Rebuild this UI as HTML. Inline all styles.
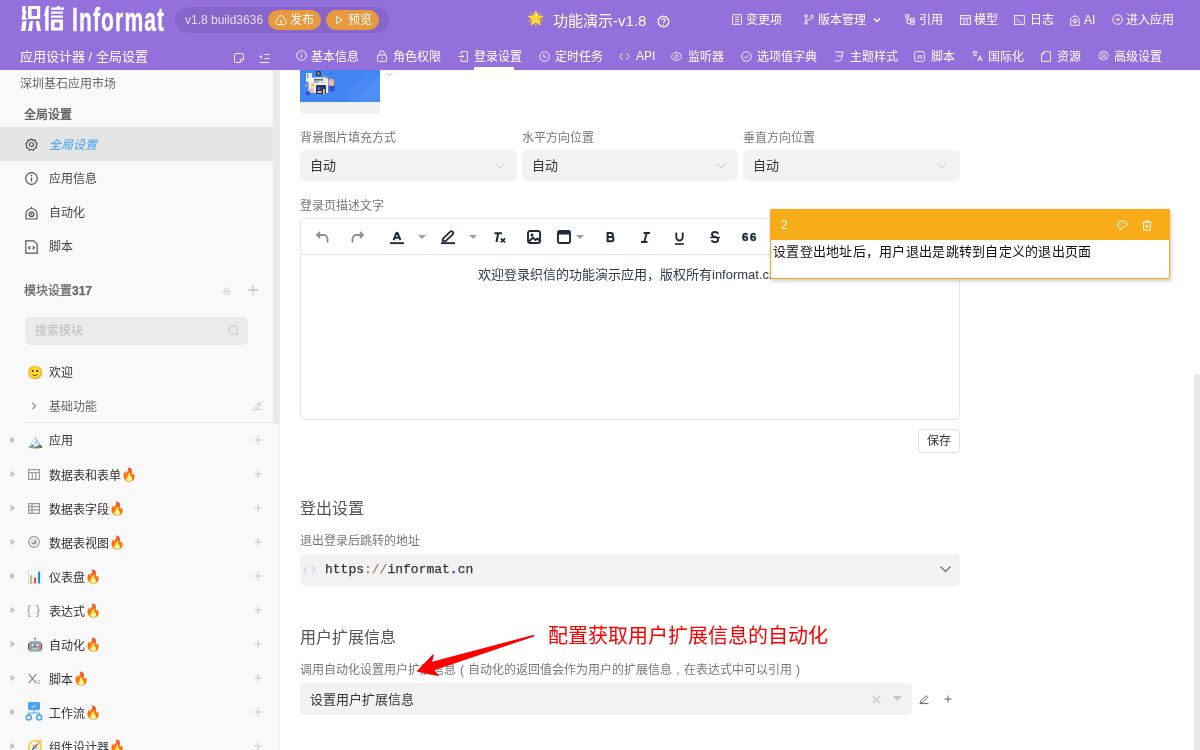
<!DOCTYPE html>
<html lang="zh-CN"><head><meta charset="utf-8">
<style>
*{box-sizing:border-box;margin:0;padding:0}
html,body{width:1200px;height:750px;overflow:hidden;background:#fff;font-family:"Liberation Sans",sans-serif}
.a{position:absolute;white-space:nowrap;line-height:1}
svg.a{overflow:visible}
#hdr{will-change:transform;position:absolute;left:0;top:0;width:1200px;height:70px;background:#9370db}
.w{color:#fff}
.hi{fill:none;stroke:#fff;stroke-width:1;opacity:.88}
#side{will-change:transform;position:absolute;left:0;top:70px;width:280px;height:680px;background:#f9f9f9}
.si{fill:none;stroke:#555;stroke-width:1.2}
.tri{fill:#bcc3ce}
.plus{stroke:#ccc;stroke-width:1.2}
#main{will-change:transform;position:absolute;left:280px;top:70px;width:920px;height:680px;background:#fff}
.lbl{color:#777;font-size:12px}
.sel{position:absolute;background:#f2f2f3;border-radius:6px}
.pc{display:inline-block;width:12px;text-align:center}
.tb{fill:none;stroke:#1f2b3a;stroke-width:1.8}
</style></head><body>

<!-- HEADER -->
<div id="hdr">
  <!-- logo -->
  <svg class="a" style="left:18px;top:3px" width="50" height="30" viewBox="0 0 50 30"><g fill="#fff">
    <path d="M4.4 3H7.8L7.3 7 8.7 9.6 7.6 11.2V14.2L8.8 15.2V16.8H3.6L4 12 5 11 4 9.6Z"/>
    <path fill-rule="evenodd" d="M10 3H22.2V16H10ZM13.6 6V13H19V6Z"/>
    <path d="M4.4 18H8.6L7.3 28H3Z M12 18H15L14 28H10Z M17.6 18H21L23 28H19.2Z"/>
    <path d="M28.2 3H31.6L30.6 6V27.8H27.2V13.5L26 12.5 27.4 7Z"/>
    <path d="M33 4.5H38.5L39 3H41.5L42 4.5H46V6.8H33Z M33 8.5H45V10.8H33Z M33 12.4H45V14.8H33Z"/>
    <path fill-rule="evenodd" d="M33 16.4H45V27.6H33ZM36.6 19.4V24.6H41.6V19.4Z"/>
  </g></svg>
  <div class="a w" style="left:72px;top:2px;font-size:34px;font-weight:bold;transform:scaleX(0.62);transform-origin:left top;-webkit-text-stroke:0.35px #fff;letter-spacing:1.8px">Informat</div>
  <!-- version pill -->
  <div class="a" style="left:175px;top:7px;width:214px;height:26px;border-radius:13px;background:#8766cc"></div>
  <div class="a" style="left:185px;top:14px;font-size:12px;color:#e4dbf6">v1.8 build3636</div>
  <div class="a" style="left:268px;top:10px;width:53px;height:20px;border-radius:10px;background:#e8993f"></div>
  <div class="a" style="left:326px;top:10px;width:53px;height:20px;border-radius:10px;background:#e8993f"></div>
  <svg class="a" style="left:275px;top:14px" width="12" height="12" viewBox="0 0 12 12"><path class="hi" d="M3 10.6H9A2.1 2.1 0 0 0 10.7 7.4C10 4 8.2 1.6 6 1.6S2 4 1.3 7.4A2.1 2.1 0 0 0 3 10.6Z"/><path class="hi" d="M6 10.2V6M4.6 7.4 6 6 7.4 7.4"/></svg>
  <div class="a w" style="left:290px;top:14px;font-size:12px">发布</div>
  <svg class="a" style="left:335px;top:15px" width="9" height="10" viewBox="0 0 9 10"><path class="hi" d="M1.5 1.2 7.3 5 1.5 8.8Z"/></svg>
  <div class="a w" style="left:348px;top:14px;font-size:12px">预览</div>

  <!-- center title -->
  <div class="a" style="left:527px;top:11px;font-size:14px">🌟</div>
  <div class="a w" style="left:553px;top:13px;font-size:15px">功能演示-v1.8</div>
  <svg class="a" style="left:657px;top:15px" width="13" height="13" viewBox="0 0 13 13"><circle class="hi" cx="6.5" cy="6.5" r="5.3" style="stroke-width:1.3;opacity:1"/><path class="hi" d="M4.8 5.2a1.7 1.7 0 1 1 2.4 1.5c-.5.3-.7.6-.7 1.2" style="stroke-width:1.2;opacity:1"/><circle cx="6.5" cy="9.6" r=".7" fill="#fff"/></svg>

  <!-- right items -->
  <svg class="a" style="left:732px;top:14px" width="10" height="11" viewBox="0 0 10 11"><rect class="hi" x=".6" y=".6" width="8.8" height="9.8" rx=".5"/><path class="hi" d="M3 3.2h4M3 5.5h4M3 7.8h4"/></svg>
  <div class="a w" style="left:746px;top:14px;font-size:12px">变更项</div>
  <svg class="a" style="left:804px;top:14px" width="10" height="11" viewBox="0 0 10 11"><circle class="hi" cx="2" cy="2" r="1.3"/><circle class="hi" cx="2" cy="9" r="1.3"/><circle class="hi" cx="8" cy="2.5" r="1.3"/><path class="hi" d="M2 3.3v4.4M8 3.8c0 2.5-6 1.5-6 3.9"/></svg>
  <div class="a w" style="left:818px;top:14px;font-size:12px">版本管理</div>
  <svg class="a" style="left:873px;top:17px" width="8" height="6" viewBox="0 0 8 6"><path class="hi" d="M1 1.5 4 4.5 7 1.5" style="stroke-width:1.3;opacity:1"/></svg>
  <svg class="a" style="left:905px;top:14px" width="10" height="11" viewBox="0 0 10 11"><rect class="hi" x=".6" y=".6" width="3" height="2.6"/><rect class="hi" x="5.6" y="4.3" width="3.6" height="2.4"/><rect class="hi" x="5.6" y="7.8" width="3.6" height="2.4"/><path class="hi" d="M2 3.2v6h3.6M2 5.5h3.6"/></svg>
  <div class="a w" style="left:919px;top:14px;font-size:12px">引用</div>
  <svg class="a" style="left:960px;top:15px" width="11" height="10" viewBox="0 0 11 10"><rect class="hi" x=".6" y=".6" width="9.8" height="8.8"/><path class="hi" d="M.6 3.3h9.8M4 3.3v6M7 3.3v6"/></svg>
  <div class="a w" style="left:974px;top:14px;font-size:12px">模型</div>
  <svg class="a" style="left:1014px;top:15px" width="11" height="10" viewBox="0 0 11 10"><rect class="hi" x=".6" y=".6" width="9.8" height="8.8"/><path class="hi" d="M2.8 3.3 4.5 5 2.8 6.7M5.3 7h2.5"/></svg>
  <div class="a w" style="left:1030px;top:14px;font-size:12px">日志</div>
  <svg class="a" style="left:1070px;top:14px" width="10" height="12" viewBox="0 0 10 12"><path class="hi" d="M.7 11.3V6.5a4.3 4.3 0 0 1 8.6 0v4.8Z"/><circle class="hi" cx="5" cy="7" r="2"/><circle cx="5" cy="7" r=".8" fill="#fff"/><path class="hi" d="M5 1V2.2"/></svg>
  <div class="a w" style="left:1084px;top:14px;font-size:12px">AI</div>
  <svg class="a" style="left:1112px;top:14px" width="11" height="11" viewBox="0 0 11 11"><circle class="hi" cx="5.5" cy="5.5" r="4.8"/><path class="hi" d="M3.2 5.5h4.2M5.7 3.8 7.4 5.5 5.7 7.2"/></svg>
  <div class="a w" style="left:1126px;top:14px;font-size:12px">进入应用</div>

  <!-- row2 -->
  <div class="a w" style="left:20px;top:50px;font-size:13px">应用设计器 / 全局设置</div>
  <svg class="a" style="left:234px;top:53px" width="10" height="10" viewBox="0 0 10 10"><path class="hi" d="M1.5.5h7a1 1 0 0 1 1 1v4.8L6.3 9.5H1.5a1 1 0 0 1-1-1v-7a1 1 0 0 1 1-1Z M9.5 6.3H7.3a1 1 0 0 0-1 1v2.2"/></svg>
  <svg class="a" style="left:259px;top:53px" width="11" height="11" viewBox="0 0 11 11"><path class="hi" d="M5.5 1.5h5M5.5 5.5h5M.5 9.5h10"/><path d="M2.7 1.8 .2 3.8 2.7 5.8Z" fill="#fff" opacity=".88"/></svg>

  <!-- tabs -->
  <svg class="a" style="left:296px;top:50px" width="11" height="11" viewBox="0 0 11 11"><circle class="hi" cx="5.5" cy="5.5" r="4.8"/><path class="hi" d="M5.5 5v3.3"/><circle cx="5.5" cy="3.3" r=".65" fill="#fff"/></svg>
  <div class="a w" style="left:311px;top:51px;font-size:12px">基本信息</div>
  <svg class="a" style="left:377px;top:50px" width="10" height="12" viewBox="0 0 10 12"><rect class="hi" x=".6" y="5" width="8.8" height="6.4" rx=".6"/><path class="hi" d="M2.6 5V3.3a2.4 2.4 0 0 1 4.8 0V5M5 7.3v1.8"/></svg>
  <div class="a w" style="left:393px;top:51px;font-size:12px">角色权限</div>
  <svg class="a" style="left:458px;top:51px" width="10" height="11" viewBox="0 0 10 11"><path class="hi" d="M3 .6h6.4v9.8H3M3 3.5v-2.9M3 10.4v-2.9M.5 5.5h5M3.8 3.8l1.7 1.7-1.7 1.7"/></svg>
  <div class="a w" style="left:474px;top:51px;font-size:12px">登录设置</div>
  <div class="a" style="left:474px;top:67px;width:40px;height:3px;background:#fff"></div>
  <svg class="a" style="left:539px;top:51px" width="11" height="11" viewBox="0 0 11 11"><circle class="hi" cx="5.5" cy="5.5" r="4.8"/><path class="hi" d="M4.8 2.8v3.3h2.6"/></svg>
  <div class="a w" style="left:555px;top:51px;font-size:12px">定时任务</div>
  <svg class="a" style="left:619px;top:52px" width="11" height="9" viewBox="0 0 11 9"><path class="hi" d="M3.6 1 .8 4.5 3.6 8M7.4 1l2.8 3.5L7.4 8"/></svg>
  <div class="a w" style="left:636px;top:50px;font-size:12px">API</div>
  <svg class="a" style="left:671px;top:52px" width="11" height="9" viewBox="0 0 11 9"><ellipse class="hi" cx="5.5" cy="4.5" rx="4.9" ry="3.9"/><circle class="hi" cx="5.5" cy="4.5" r="1.6"/></svg>
  <div class="a w" style="left:688px;top:51px;font-size:12px">监听器</div>
  <svg class="a" style="left:741px;top:51px" width="11" height="11" viewBox="0 0 11 11"><circle class="hi" cx="5.5" cy="5.5" r="4.8"/><path class="hi" d="M3.3 5.6l1.6 1.6 3-3"/></svg>
  <div class="a w" style="left:757px;top:51px;font-size:12px">选项值字典</div>
  <svg class="a" style="left:834px;top:51px" width="10" height="11" viewBox="0 0 10 11"><path class="hi" d="M1 1h8l-1 4H2.5M8 5c0 3-1 5-4.5 5H1"/></svg>
  <div class="a w" style="left:850px;top:51px;font-size:12px">主题样式</div>
  <svg class="a" style="left:914px;top:51px" width="11" height="11" viewBox="0 0 11 11"><rect class="hi" x=".6" y=".6" width="9.8" height="9.8" rx="2"/><path class="hi" d="M3.3 6.5c0 1.3 1.5 1.3 1.5 0V4M6.3 7.2c.8.6 1.8.3 1.8-.5s-1.8-.6-1.8-1.4.9-1 1.7-.6"/></svg>
  <div class="a w" style="left:931px;top:51px;font-size:12px">脚本</div>
  <svg class="a" style="left:972px;top:50px" width="11" height="12" viewBox="0 0 11 12"><path class="hi" d="M.5 2h5M3 .6V2M1.2 2c.5 2 2 3.3 3.8 4M5 2c-.5 2-2 3.5-4.4 4.3M5.8 11.2l2.2-5.5 2.2 5.5M6.6 9.3h2.8"/></svg>
  <div class="a w" style="left:988px;top:51px;font-size:12px">国际化</div>
  <svg class="a" style="left:1041px;top:51px" width="10" height="11" viewBox="0 0 10 11"><path class="hi" d="M3 .6h6.4v9.8H.6V3Z M3 .6V3H.6"/></svg>
  <div class="a w" style="left:1057px;top:51px;font-size:12px">资源</div>
  <svg class="a" style="left:1098px;top:50px" width="11" height="12" viewBox="0 0 11 12"><path class="hi" d="M5.5.8l1.4 1.5 2 -.2.4 2 1.5 1.4-1.5 1.4-.4 2-2-.2-1.4 1.5-1.4-1.5-2 .2-.4-2L.6 5.5l1.5-1.4.4-2 2 .2Z"/><circle class="hi" cx="5.5" cy="5.5" r="1.6"/></svg>
  <div class="a w" style="left:1114px;top:51px;font-size:12px">高级设置</div>
</div>

<!-- SIDEBAR -->

<div id="side">
  <div class="a" style="left:273px;top:0;width:7px;height:354px;background:#e8e9ed;border-radius:0 0 3.5px 3.5px"></div>
  <div class="a" style="left:20px;top:8px;font-size:12px;color:#666">深圳基石应用市场</div>
  <div class="a" style="left:24px;top:39px;font-size:12px;color:#555;font-weight:500;-webkit-text-stroke:.3px #555">全局设置</div>
  <div class="a" style="left:0;top:57px;width:273px;height:34px;background:#e5e5e5"></div>
  <svg class="a" style="left:25px;top:68px" width="13" height="13" viewBox="0 0 13 13"><path class="si" d="M6.5.9l1.6 1.4 2.1-.1.4 2.1 1.6 1.4-1 1.9.3 2.1-2 .7-1.1 1.8-1.9-.9-1.9.9-1.1-1.8-2-.7.3-2.1-1-1.9 1.6-1.4.4-2.1 2.1.1Z" stroke="#333"/><circle class="si" cx="6.5" cy="6.5" r="2" stroke="#333"/></svg>
  <div class="a" style="left:49px;top:69px;font-size:12px;color:#3ea1fa;font-style:italic">全局设置</div>
  <svg class="a" style="left:25px;top:102px" width="13" height="13" viewBox="0 0 13 13"><circle class="si" cx="6.5" cy="6.5" r="5.8"/><path class="si" d="M6.5 5.5v4"/><circle cx="6.5" cy="3.6" r=".8" fill="#555"/></svg>
  <div class="a" style="left:49px;top:103px;font-size:12px;color:#444">应用信息</div>
  <svg class="a" style="left:25px;top:136px" width="13" height="14" viewBox="0 0 13 14"><path class="si" d="M1 13V8a5.5 5.5 0 0 1 11 0v5Z"/><circle class="si" cx="6.5" cy="8.3" r="2.4"/><circle cx="6.5" cy="8.3" r="1" fill="#555"/><path class="si" d="M6.5 .8v1.8"/></svg>
  <div class="a" style="left:49px;top:137px;font-size:12px;color:#444">自动化</div>
  <svg class="a" style="left:25px;top:170px" width="13" height="14" viewBox="0 0 13 14"><path class="si" d="M.8.8h8l3.4 3.4v9H.8Z"/><path class="si" d="M5.3 6.3 3.6 7.8 5.3 9.3M7.7 6.3l1.7 1.5-1.7 1.5"/></svg>
  <div class="a" style="left:49px;top:171px;font-size:12px;color:#444">脚本</div>

  <div class="a" style="left:24px;top:215px;font-size:12px;color:#666;font-weight:500;-webkit-text-stroke:.25px #666">模块设置<b>317</b></div>
  <svg class="a" style="left:222px;top:216px" width="9" height="9" viewBox="0 0 9 9"><path d="M4.5 1.2 7.8 5.5H1.2Z" fill="none" stroke="#c8c8c8" stroke-width=".9"/><path d="M1 7.8h7" stroke="#c8c8c8" stroke-width=".9"/></svg>
  <svg class="a" style="left:248px;top:215px" width="10" height="10" viewBox="0 0 10 10"><path d="M5 0v10M0 5h10" stroke="#c4c4c4" stroke-width="1.3"/></svg>
  <div class="a" style="left:25px;top:247px;width:223px;height:28px;border-radius:5px;background:#ebebeb"></div>
  <div class="a" style="left:35px;top:255px;font-size:12px;color:#bbb">搜索模块</div>
  <svg class="a" style="left:228px;top:255px" width="12" height="11" viewBox="0 0 12 11"><circle cx="5.2" cy="5" r="4.3" fill="none" stroke="#c4c4c4" stroke-width="1.1"/><path d="M8.3 8.1l2.3 2.2" stroke="#c4c4c4" stroke-width="1.1"/></svg>

  <div class="a" style="left:27px;top:296px;font-size:13px">🙂</div>
  <div class="a" style="left:49px;top:297px;font-size:12px;color:#333">欢迎</div>
  <svg class="a" style="left:31px;top:332px" width="6" height="8" viewBox="0 0 6 8"><path d="M1.5 1 4.5 4 1.5 7" fill="none" stroke="#888" stroke-width="1.1"/></svg>
  <div class="a" style="left:49px;top:331px;font-size:12px;color:#666">基础功能</div>
  <svg class="a" style="left:252px;top:329px" width="11" height="11" viewBox="0 0 11 11"><path d="M1.5 9.5 8 3l1.5 1.5L3 11H1.5Z M.5 10.5h10" fill="none" stroke="#ccc" stroke-width="1"/></svg>
  <div class="a" style="left:24px;top:352px;width:249px;height:1px;background:#e6e6e6"></div>
  <div class="a" style="left:279px;top:352px;width:1px;height:328px;background:#ececec"></div>
  <div class="a" style="left:0;top:365px;width:279px;height:12px">
    <svg class="a" style="left:10px;top:1px" width="6" height="8" viewBox="0 0 6 8"><path class="tri" d="M.5.5 5.2 4 .5 7.5Z"/></svg>
    <div class="a" style="left:27px;top:0px;font-size:13px">🏔️</div>
    <div class="a" style="left:49px;top:0;font-size:12px;color:#333">应用</div>
    <svg class="a" style="left:254px;top:1px" width="8" height="8" viewBox="0 0 8 8"><path class="plus" d="M4 0v8M0 4h8"/></svg>
  </div>
  <div class="a" style="left:0;top:399px;width:279px;height:12px">
    <svg class="a" style="left:10px;top:1px" width="6" height="8" viewBox="0 0 6 8"><path class="tri" d="M.5.5 5.2 4 .5 7.5Z"/></svg>
    <svg class="a" style="left:28px;top:0px" width="12" height="11" viewBox="0 0 12 11"><rect x=".6" y=".6" width="10.8" height="9.8" fill="none" stroke="#999" stroke-width="1.2"/><path d="M.6 3.5h10.8M4.3 3.5v7M7.7 3.5v7" stroke="#999" stroke-width="1.2"/></svg>
    <div class="a" style="left:49px;top:0;font-size:12px;color:#333">数据表和表单<span style="font-size:13px;position:relative;top:-1px;left:-.5px">🔥</span></div>
    <svg class="a" style="left:254px;top:1px" width="8" height="8" viewBox="0 0 8 8"><path class="plus" d="M4 0v8M0 4h8"/></svg>
  </div>
  <div class="a" style="left:0;top:433px;width:279px;height:12px">
    <svg class="a" style="left:10px;top:1px" width="6" height="8" viewBox="0 0 6 8"><path class="tri" d="M.5.5 5.2 4 .5 7.5Z"/></svg>
    <svg class="a" style="left:28px;top:0px" width="12" height="11" viewBox="0 0 12 11"><rect x=".6" y=".6" width="10.8" height="9.8" fill="none" stroke="#999" stroke-width="1.2"/><path d="M.6 3.7h10.8M.6 6.9h10.8M4 .6v9.8" stroke="#999" stroke-width="1.2"/></svg>
    <div class="a" style="left:49px;top:0;font-size:12px;color:#333">数据表字段<span style="font-size:13px;position:relative;top:-1px;left:-.5px">🔥</span></div>
    <svg class="a" style="left:254px;top:1px" width="8" height="8" viewBox="0 0 8 8"><path class="plus" d="M4 0v8M0 4h8"/></svg>
  </div>
  <div class="a" style="left:0;top:467px;width:279px;height:12px">
    <svg class="a" style="left:10px;top:1px" width="6" height="8" viewBox="0 0 6 8"><path class="tri" d="M.5.5 5.2 4 .5 7.5Z"/></svg>
    <svg class="a" style="left:28px;top:-1px" width="12" height="12" viewBox="0 0 12 12"><circle cx="6" cy="6" r="5.3" fill="none" stroke="#999" stroke-width="1.2"/><circle cx="6" cy="6" r="2.6" fill="#999"/><circle cx="5.2" cy="5.2" r="1.2" fill="#f9f9f9"/></svg>
    <div class="a" style="left:49px;top:0;font-size:12px;color:#333">数据表视图<span style="font-size:13px;position:relative;top:-1px;left:-.5px">🔥</span></div>
    <svg class="a" style="left:254px;top:1px" width="8" height="8" viewBox="0 0 8 8"><path class="plus" d="M4 0v8M0 4h8"/></svg>
  </div>
  <div class="a" style="left:0;top:501px;width:279px;height:12px">
    <svg class="a" style="left:10px;top:1px" width="6" height="8" viewBox="0 0 6 8"><path class="tri" d="M.5.5 5.2 4 .5 7.5Z"/></svg>
    <div class="a" style="left:27px;top:-1px;font-size:13px">📊</div>
    <div class="a" style="left:49px;top:0;font-size:12px;color:#333">仪表盘<span style="font-size:13px;position:relative;top:-1px;left:-.5px">🔥</span></div>
    <svg class="a" style="left:254px;top:1px" width="8" height="8" viewBox="0 0 8 8"><path class="plus" d="M4 0v8M0 4h8"/></svg>
  </div>
  <div class="a" style="left:0;top:535px;width:279px;height:12px">
    <svg class="a" style="left:10px;top:1px" width="6" height="8" viewBox="0 0 6 8"><path class="tri" d="M.5.5 5.2 4 .5 7.5Z"/></svg>
    <div class="a" style="left:27px;top:-1px;font-size:12px;color:#999">{</div><div class="a" style="left:36px;top:-1px;font-size:12px;color:#999">}</div>
    <div class="a" style="left:49px;top:0;font-size:12px;color:#333">表达式<span style="font-size:13px;position:relative;top:-1px;left:-.5px">🔥</span></div>
    <svg class="a" style="left:254px;top:1px" width="8" height="8" viewBox="0 0 8 8"><path class="plus" d="M4 0v8M0 4h8"/></svg>
  </div>
  <div class="a" style="left:0;top:569px;width:279px;height:12px">
    <svg class="a" style="left:10px;top:1px" width="6" height="8" viewBox="0 0 6 8"><path class="tri" d="M.5.5 5.2 4 .5 7.5Z"/></svg>
    <div class="a" style="left:27px;top:-1px;font-size:13px">🤖</div>
    <div class="a" style="left:49px;top:0;font-size:12px;color:#333">自动化<span style="font-size:13px;position:relative;top:-1px;left:-.5px">🔥</span></div>
    <svg class="a" style="left:254px;top:1px" width="8" height="8" viewBox="0 0 8 8"><path class="plus" d="M4 0v8M0 4h8"/></svg>
  </div>
  <div class="a" style="left:0;top:603px;width:279px;height:12px">
    <svg class="a" style="left:10px;top:1px" width="6" height="8" viewBox="0 0 6 8"><path class="tri" d="M.5.5 5.2 4 .5 7.5Z"/></svg>
    <svg class="a" style="left:28px;top:0px" width="13" height="12" viewBox="0 0 13 12"><path d="M.8 .8 8.3 10.2M8.3 .8 .8 10.2" stroke="#8c8c8c" stroke-width="1.25"/><text x="9.2" y="10.8" font-size="5" fill="#8c8c8c" font-family="Liberation Sans">2</text></svg>
    <div class="a" style="left:49px;top:0;font-size:12px;color:#333">脚本<span style="font-size:13px;position:relative;top:-1px;left:-.5px">🔥</span></div>
    <svg class="a" style="left:254px;top:1px" width="8" height="8" viewBox="0 0 8 8"><path class="plus" d="M4 0v8M0 4h8"/></svg>
  </div>
  <div class="a" style="left:0;top:637px;width:279px;height:12px">
    <svg class="a" style="left:10px;top:1px" width="6" height="8" viewBox="0 0 6 8"><path class="tri" d="M.5.5 5.2 4 .5 7.5Z"/></svg>
    <svg class="a" style="left:25px;top:-5px" width="18" height="19" viewBox="0 0 18 19"><rect x="3" y="0" width="12" height="8" rx="1.5" fill="#4aa3f7"/><path d="M6.8 4 8.3 5.3 11 2.8" fill="none" stroke="#fff" stroke-width=".9"/><path d="M9 8v3M3.8 13.5v-2.5h10.4v2.5" fill="none" stroke="#4aa3f7" stroke-width="1.2"/><circle cx="3.8" cy="15.5" r="2.5" fill="none" stroke="#4aa3f7" stroke-width="1.5"/><circle cx="14.2" cy="15.5" r="2.5" fill="none" stroke="#4aa3f7" stroke-width="1.5"/></svg>
    <div class="a" style="left:49px;top:0;font-size:12px;color:#333">工作流<span style="font-size:13px;position:relative;top:-1px;left:-.5px">🔥</span></div>
    <svg class="a" style="left:254px;top:1px" width="8" height="8" viewBox="0 0 8 8"><path class="plus" d="M4 0v8M0 4h8"/></svg>
  </div>
  <div class="a" style="left:0;top:671px;width:279px;height:12px">
    <svg class="a" style="left:10px;top:1px" width="6" height="8" viewBox="0 0 6 8"><path class="tri" d="M.5.5 5.2 4 .5 7.5Z"/></svg>
    <div class="a" style="left:27px;top:-1px;font-size:13px">🧭</div>
    <div class="a" style="left:49px;top:0;font-size:12px;color:#333">组件设计器<span style="font-size:13px;position:relative;top:-1px;left:-.5px">🔥</span></div>
    <svg class="a" style="left:254px;top:1px" width="8" height="8" viewBox="0 0 8 8"><path class="plus" d="M4 0v8M0 4h8"/></svg>
  </div>
</div>

<!-- MAIN -->

<div id="main">
  <!-- image thumb (main coords: x-280, y-70) -->
  <div class="a" style="left:20px;top:0;width:80px;height:44px;border-radius:0 0 5px 5px;background:#f0f0f0;overflow:hidden">
    <svg class="a" style="left:0;top:0;overflow:hidden" width="80" height="32" viewBox="0 0 80 32">
      <rect width="80" height="32" fill="#4186f2"/>
      <rect x="50" y="8" width="34" height="34" rx="4" fill="#4889f3" transform="rotate(45 67 25)"/>
      <rect x="62" y="12" width="34" height="34" rx="4" fill="#4f8ef4" transform="rotate(45 79 29)"/>
      <rect x="6" y="3" width="6" height="9" rx=".5" fill="#e6ebf8"/>
      <path d="M7 5h1.5M7 7h1.5" stroke="#3a4fc6" stroke-width="1"/>
      <rect x="8.5" y="7.5" width="19.5" height="15.5" rx="1" fill="#eceff8"/>
      <rect x="14" y="9" width="9" height="1.6" fill="#5b6275"/>
      <path d="M14 12.5c2-1.5 3 1 5-.5M21 12.5c1.5-1 2.5.5 4-.5" stroke="#d9b24a" stroke-width=".8" fill="none"/>
      <path d="M14 12c2-1 3 1 5-.5" stroke="#4f63d8" stroke-width=".8" fill="none"/>
      <rect x="16" y="15" width="10" height="9" rx="1" fill="#28335e"/>
      <rect x="17.5" y="17" width="3" height="3" rx="1.5" fill="#4a63e0"/>
      <rect x="17.5" y="21" width="4" height="2" fill="#c9ccd6"/>
      <rect x="23" y="19" width="2" height="5" fill="#f0b93a"/>
      <rect x="16" y="1" width="5" height="5" rx=".8" fill="#2a3566"/>
      <rect x="17.5" y="2.5" width="2" height="2" fill="#e9b949"/>
      <ellipse cx="12.7" cy="15.2" rx="1.8" ry="2.3" fill="#f5c84a"/>
      <path d="M9.5 18.5h4.5v4.5h-4.5Z" fill="#f0b39c"/>
      <path d="M5.5 22l4-1 1 3.5-4 1.5Z" fill="#3b4bd0"/>
      <path d="M24 5c1 2.5 3.5 3.5 5 2.5-.5 1.5-2.5 2-4 1-1-.8-1.3-2.2-1-3.5Z" fill="#f3c444"/>
      <rect x="28.5" y="9" width="5.5" height="7" rx="2" fill="#f1b8a2"/>
      <rect x="29.5" y="16" width="5" height="5.5" fill="#3c4cc8"/>
      <circle cx="6" cy="15.5" r="1" fill="#f0b93a"/>
      <circle cx="31" cy="3.5" r=".8" fill="#3a50c8"/>
    </svg>
  </div>
  <svg class="a" style="left:106px;top:2px" width="7" height="4" viewBox="0 0 7 4"><path d="M.5.5 3.5 3.3 6.5.5" fill="none" stroke="#c8c8c8" stroke-width=".9"/></svg>

  <!-- three selects -->
  <div class="a lbl" style="left:20px;top:62px">背景图片填充方式</div>
  <div class="a lbl" style="left:242px;top:62px">水平方向位置</div>
  <div class="a lbl" style="left:463px;top:62px">垂直方向位置</div>
  <div class="sel" style="left:20px;top:80px;width:217px;height:31px"></div>
  <div class="sel" style="left:242px;top:80px;width:216px;height:31px"></div>
  <div class="sel" style="left:463px;top:80px;width:217px;height:31px"></div>
  <div class="a" style="left:30px;top:89px;font-size:13px;color:#333">自动</div>
  <div class="a" style="left:252px;top:89px;font-size:13px;color:#333">自动</div>
  <div class="a" style="left:473px;top:89px;font-size:13px;color:#333">自动</div>
  <svg class="a" style="left:215px;top:93px" width="10" height="6" viewBox="0 0 10 6"><path d="M.5.5 5 5 9.5.5" fill="none" stroke="#c9c9cf" stroke-width="1"/></svg>
  <svg class="a" style="left:436px;top:93px" width="10" height="6" viewBox="0 0 10 6"><path d="M.5.5 5 5 9.5.5" fill="none" stroke="#c9c9cf" stroke-width="1"/></svg>
  <svg class="a" style="left:657px;top:93px" width="10" height="6" viewBox="0 0 10 6"><path d="M.5.5 5 5 9.5.5" fill="none" stroke="#c9c9cf" stroke-width="1"/></svg>

  <!-- editor -->
  <div class="a lbl" style="left:20px;top:130px">登录页描述文字</div>
  <div class="a" style="left:20px;top:148px;width:660px;height:202px;border:1px solid #e3e5ec;border-radius:5px"></div>
  <div class="a" style="left:21px;top:184px;width:658px;height:1px;background:#e3e5ec"></div>
  <!-- toolbar icons -->
  <svg class="a" style="left:36px;top:161px" width="13" height="12" viewBox="0 0 13 12"><path d="M4 1 1 4l3 3M1 4h6.5A4 4 0 0 1 11.5 8v3.5" fill="none" stroke="#8a9099" stroke-width="1.8"/></svg>
  <svg class="a" style="left:71px;top:161px" width="13" height="12" viewBox="0 0 13 12"><path d="M9 1l3 3-3 3M12 4H5.5A4 4 0 0 0 1.5 8v3.5" fill="none" stroke="#8a9099" stroke-width="1.8"/></svg>
  <svg class="a" style="left:110px;top:160px" width="14" height="16" viewBox="0 0 14 16"><path d="M3.6 10.2 6.2 3.4Q7 1.9 7.8 3.4L10.4 10.2M4.9 7.7h4.2" fill="none" stroke="#1f2b3a" stroke-width="2"/><rect x="0" y="12.2" width="14" height="1.9" fill="#1f2b3a"/></svg>
  <svg class="a" style="left:138px;top:165px" width="8" height="4" viewBox="0 0 8 4"><path d="M0 0h8L4 4Z" fill="#9aa0a8"/></svg>
  <svg class="a" style="left:161px;top:160px" width="14" height="16" viewBox="0 0 14 16"><path d="M1.5 10.8 2 8.6 9.3 1.6a1.4 1.4 0 0 1 2 0l.6.6a1.4 1.4 0 0 1 0 2L4.6 11.2Z" fill="none" stroke="#1f2b3a" stroke-width="1.8" stroke-linejoin="round"/><rect x="0" y="12.2" width="14" height="1.9" fill="#1f2b3a"/></svg>
  <svg class="a" style="left:189px;top:165px" width="8" height="4" viewBox="0 0 8 4"><path d="M0 0h8L4 4Z" fill="#9aa0a8"/></svg>
  <svg class="a" style="left:214px;top:162px" width="12" height="11" viewBox="0 0 12 11"><path d="M.5 1.2h7.5M4.2 1.2 2.5 10" fill="none" stroke="#1f2b3a" stroke-width="2"/><path d="M6.8 6.3l4.2 4M11 6.3l-4.2 4" stroke="#1f2b3a" stroke-width="1.6"/></svg>
  <svg class="a" style="left:247px;top:160px" width="14" height="14" viewBox="0 0 14 14"><rect x="1" y="1" width="12" height="12" rx="2" fill="none" stroke="#1f2b3a" stroke-width="1.9"/><circle cx="5" cy="5" r="1.5" fill="#1f2b3a"/><path d="M1.5 12 6 7.5l2.5 2.5 2-1.5 2.5 2.5" fill="none" stroke="#1f2b3a" stroke-width="1.9"/></svg>
  <svg class="a" style="left:277px;top:160px" width="14" height="14" viewBox="0 0 14 14"><rect x="1" y="1" width="12" height="12" rx="1.5" fill="none" stroke="#1f2b3a" stroke-width="1.9"/><rect x="1" y="1" width="12" height="3.5" fill="#1f2b3a"/></svg>
  <svg class="a" style="left:296px;top:165px" width="8" height="4" viewBox="0 0 8 4"><path d="M0 0h8L4 4Z" fill="#9aa0a8"/></svg>
  <svg class="a" style="left:326px;top:162px" width="9" height="10" viewBox="0 0 9 10"><path d="M1.6 1h3.3a2 2 0 0 1 0 4H1.6ZM1.6 5h3.8a2.1 2.1 0 0 1 0 4.2H1.6Z" fill="none" stroke="#1f2b3a" stroke-width="2.1" stroke-linejoin="round"/></svg>
  <svg class="a" style="left:360px;top:162px" width="11" height="11" viewBox="0 0 11 11"><path d="M3.5 1h6.5M1 10h6.5M6.8 1 4.2 10" fill="none" stroke="#1f2b3a" stroke-width="1.9"/></svg>
  <svg class="a" style="left:394px;top:162px" width="11" height="13" viewBox="0 0 11 13"><path d="M2.3 .5v4.8a3.2 3.2 0 0 0 6.4 0V.5" fill="none" stroke="#1f2b3a" stroke-width="1.9"/><path d="M1 12h9" stroke="#1f2b3a" stroke-width="1.6"/></svg>
  <svg class="a" style="left:430px;top:161px" width="10" height="13" viewBox="0 0 10 13"><path d="M8.3 2.8C7.6 1.6 6.5 1 5 1 3.2 1 1.9 2 1.9 3.4c0 1.3 1 1.9 3.1 2.4 2.2.5 3.2 1.3 3.2 2.8 0 1.6-1.4 2.6-3.3 2.6-1.6 0-2.8-.6-3.5-1.9" fill="none" stroke="#1f2b3a" stroke-width="1.9"/><path d="M0 6.5h10" stroke="#1f2b3a" stroke-width="1.3"/></svg>
  <div class="a" style="left:462px;top:162px;font-size:11.5px;font-weight:bold;color:#1f2b3a;letter-spacing:1.5px;-webkit-text-stroke:.5px #1f2b3a">66</div>
  <div class="a" style="left:198px;top:198px;font-size:13px;color:#2c3a4a">欢迎登录织信的功能演示应用，版权所有informat.cn</div>

  <!-- save -->
  <div class="a" style="left:638px;top:359px;width:42px;height:24px;border:1px solid #dfe1e8;border-radius:4px;background:#fff"></div>
  <div class="a" style="left:647px;top:365px;font-size:12px;color:#333">保存</div>

  <!-- logout -->
  <div class="a" style="left:20px;top:431px;font-size:16px;color:#555">登出设置</div>
  <div class="a lbl" style="left:20px;top:465px">退出登录后跳转的地址</div>
  <div class="sel" style="left:20px;top:484px;width:660px;height:32px;border-radius:5px"></div>
  <svg class="a" style="left:23px;top:495px" width="13" height="10" viewBox="0 0 13 10"><path d="M4.2 1 1 5l3.2 4M8.8 1 12 5 8.8 9" fill="none" stroke="#bfd0f2" stroke-width="1.1"/></svg>
  <div class="a" style="left:45px;top:493px;font-size:13px;font-family:'Liberation Mono',monospace;color:#333;-webkit-text-stroke:.25px currentColor">https<span style="color:#a67f59">://</span>informat<span style="color:#1a1aff">.</span>cn</div>
  <svg class="a" style="left:660px;top:496px" width="11" height="7" viewBox="0 0 11 7"><path d="M.5.5 5.5 5.5 10.5.5" fill="none" stroke="#666" stroke-width="1.1"/></svg>

  <!-- user ext -->
  <div class="a" style="left:20px;top:560px;font-size:16px;color:#555">用户扩展信息</div>
  <div class="a lbl" style="left:20px;top:594px">调用自动化设置用户扩展信息<span class="pc">(</span>自动化的返回值会作为用户的扩展信息<span class="pc">,</span>在表达式中可以引用<span class="pc">)</span></div>
  <div class="sel" style="left:20px;top:613px;width:612px;height:32px;border-radius:5px"></div>
  <div class="a" style="left:30px;top:623px;font-size:13px;color:#333">设置用户扩展信息</div>
  <svg class="a" style="left:592px;top:625px" width="9" height="9" viewBox="0 0 9 9"><path d="M1 1 8 8M8 1 1 8" stroke="#cbcbcb" stroke-width="1.5"/></svg>
  <svg class="a" style="left:613px;top:626px" width="9" height="5" viewBox="0 0 9 5"><path d="M0 0h9L4.5 5Z" fill="#c4c4c4"/></svg>
  <svg class="a" style="left:639px;top:624px" width="10" height="10" viewBox="0 0 10 10"><path d="M1.5 7.2 7 1.7 8.6 3.3 3.1 8.8H1.5Z" fill="none" stroke="#666" stroke-width="1"/><path d="M.5 9.6h9" stroke="#666" stroke-width="1"/></svg>
  <svg class="a" style="left:664px;top:625px" width="8" height="8" viewBox="0 0 8 8"><path d="M4 .5v7M.5 4h7" stroke="#666" stroke-width="1"/></svg>

  <!-- annotation -->
  <div class="a" style="left:268px;top:556px;font-size:20px;color:#ff0000;font-weight:500">配置获取用户扩展信息的自动化</div>
  <svg class="a" style="left:130px;top:560px" width="130" height="50" viewBox="0 0 130 50"><path d="M6.5 41.6 22.9 24.3 23.8 25.5 22 31.8 124 4.8 124 6.5 24.3 40.2 29.2 46.3Z" fill="#ff0000"/></svg>

  <!-- right scrollbar -->
  <div class="a" style="left:914px;top:304px;width:6px;height:376px;background:#e9eaee;border-radius:3px 3px 0 0"></div>

  <!-- sticky note -->
  <div class="a" style="left:490px;top:139px;width:400px;height:70px;border:1px solid #f8ac17;border-radius:2px;background:#fff;box-shadow:1px 2px 4px rgba(0,0,0,.22)"></div>
  <div class="a" style="left:490px;top:139px;width:400px;height:31px;background:#f8ac17;border-radius:2px 2px 0 0"></div>
  <div class="a w" style="left:501px;top:149px;font-size:12px">2</div>
  <svg class="a" style="left:837px;top:150px" width="11" height="10" viewBox="0 0 11 10"><path d="M5.5.6C2.5.6.6 2.6.6 5c0 2.5 2 4.4 4 4.4.8 0 .7-1 .3-1.5-.4-.6 0-1.4.8-1.4h1.6c1.6 0 3.1-.9 3.1-2.6C10.4 2.1 8.3.6 5.5.6Z" fill="none" stroke="#fff" stroke-width="1"/><circle cx="3" cy="4.5" r=".7" fill="#fff"/><circle cx="5" cy="2.8" r=".7" fill="#fff"/><circle cx="7.5" cy="3.2" r=".7" fill="#fff"/></svg>
  <svg class="a" style="left:862px;top:150px" width="10" height="11" viewBox="0 0 10 11"><path d="M.5 2.3h9M3.5 2.3V.8h3v1.5M1.6 2.3v7.9h6.8V2.3" fill="none" stroke="#fff" stroke-width="1"/><rect x="3.7" y="4.8" width="2.6" height="2.8" fill="#fff" opacity=".8"/></svg>
  <div class="a" style="left:493px;top:175px;font-size:13px;letter-spacing:.27px;color:#111;font-weight:500">设置登出地址后，用户退出是跳转到自定义的退出页面</div>
</div>

</body></html>
